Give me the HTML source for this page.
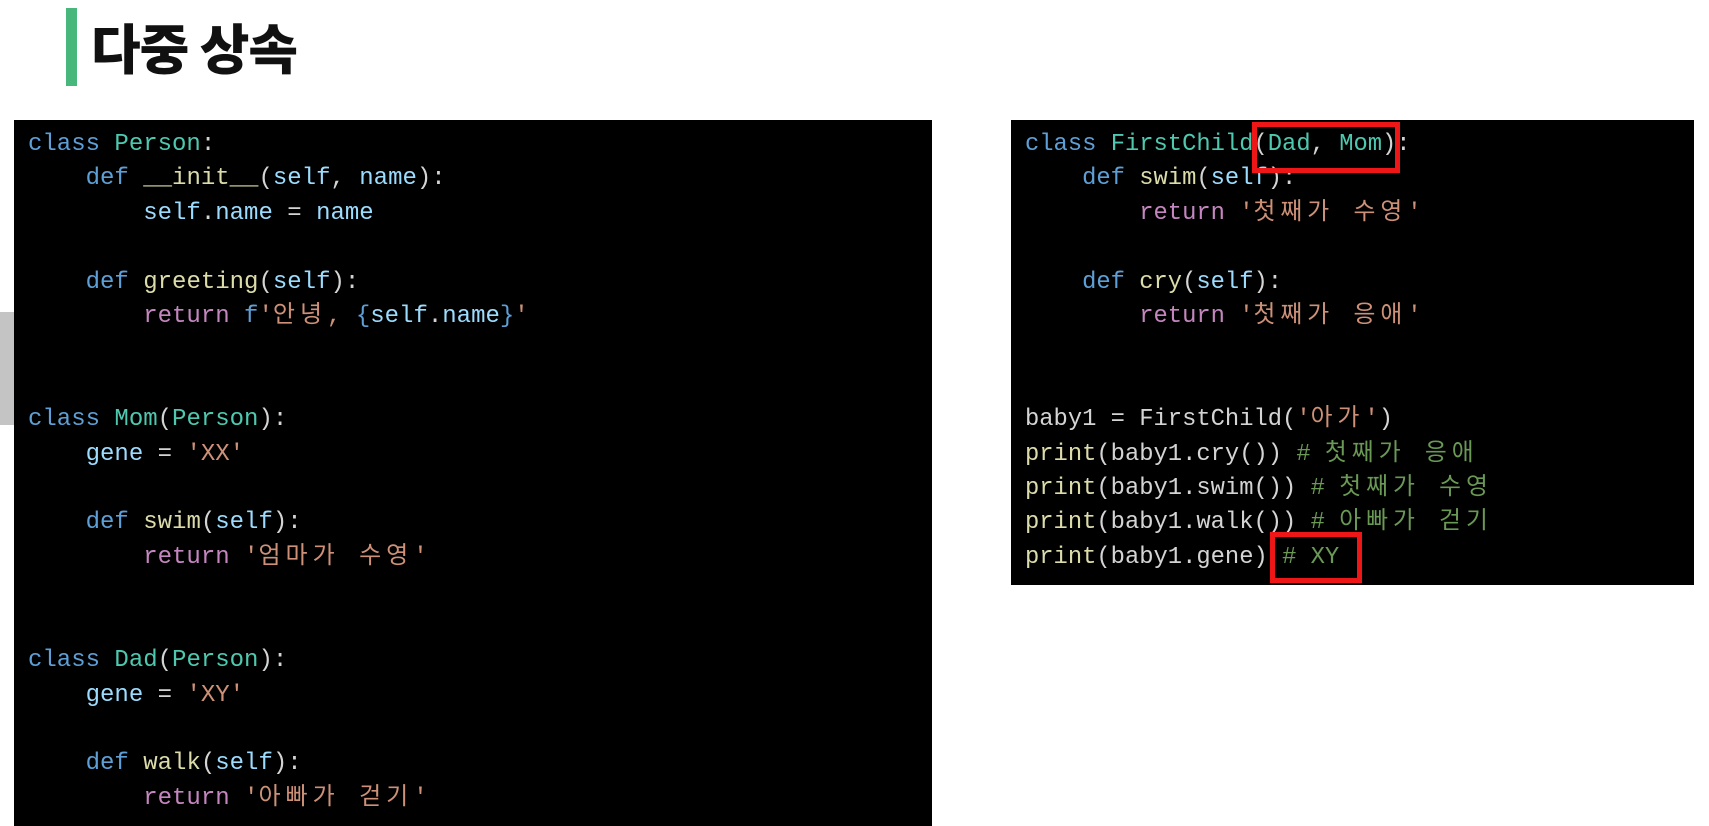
<!DOCTYPE html>
<html><head><meta charset="utf-8"><style>
body{margin:0;width:1709px;height:826px;background:#fff;position:relative;overflow:hidden}
.bar{position:absolute;left:66px;top:8px;width:11px;height:78px;background:#47b77c}
.title{position:absolute;left:91px;top:6px;font:900 54px "Noto Sans CJK KR",sans-serif;color:#111;letter-spacing:-1px;line-height:80px}
.side{position:absolute;left:0;top:312px;width:14px;height:113px;background:#c4c4c4}
.panel{position:absolute;background:#000}
pre{margin:0;font-family:"Liberation Mono","Noto Sans CJK KR",monospace;line-height:34.4px;color:#d4d4d4}
.k{color:#5d9fd6}.c{color:#4ec9b0}.f{color:#dcdcaa}.p{color:#9cdcfe}.r{color:#c586c0}.s{color:#ce9178}.m{color:#6a9955}
.h{letter-spacing:5px}
.box{position:absolute;border:5px solid #ee1616;box-sizing:border-box}
</style></head><body>
<div class="bar"></div><div class="title">다중 상속</div>
<div class="side"></div>
<div class="panel" style="left:14px;top:120px;width:918px;height:706px">
<pre style="position:absolute;left:14px;top:8px;font-size:24px"><span class="k">class</span> <span class="c">Person</span>:
    <span class="k">def</span> <span class="f">__init__</span>(<span class="p">self</span>, <span class="p">name</span>):
        <span class="p">self</span>.<span class="p">name</span> = <span class="p">name</span>

    <span class="k">def</span> <span class="f">greeting</span>(<span class="p">self</span>):
        <span class="r">return</span> <span class="k">f</span><span class="s">'<span class="h">안녕</span>, </span><span class="k">{</span><span class="p">self</span>.<span class="p">name</span><span class="k">}</span><span class="s">'</span>


<span class="k">class</span> <span class="c">Mom</span>(<span class="c">Person</span>):
    <span class="p">gene</span> = <span class="s">'XX'</span>

    <span class="k">def</span> <span class="f">swim</span>(<span class="p">self</span>):
        <span class="r">return</span> <span class="s">'<span class="h">엄마가 수영</span>'</span>


<span class="k">class</span> <span class="c">Dad</span>(<span class="c">Person</span>):
    <span class="p">gene</span> = <span class="s">'XY'</span>

    <span class="k">def</span> <span class="f">walk</span>(<span class="p">self</span>):
        <span class="r">return</span> <span class="s">'<span class="h">아빠가 걷기</span>'</span></pre>
</div>
<div class="panel" style="left:1011px;top:120px;width:683px;height:465px">
<pre style="position:absolute;left:14px;top:8px;font-size:23.8px"><span class="k">class</span> <span class="c">FirstChild</span>(<span class="c">Dad</span>, <span class="c">Mom</span>):
    <span class="k">def</span> <span class="f">swim</span>(<span class="p">self</span>):
        <span class="r">return</span> <span class="s">'<span class="h">첫째가 수영</span>'</span>

    <span class="k">def</span> <span class="f">cry</span>(<span class="p">self</span>):
        <span class="r">return</span> <span class="s">'<span class="h">첫째가 응애</span>'</span>


baby1 = FirstChild(<span class="s">'<span class="h">아가</span>'</span>)
<span class="f">print</span>(baby1.cry()) <span class="m"># <span class="h">첫째가 응애</span></span>
<span class="f">print</span>(baby1.swim()) <span class="m"># <span class="h">첫째가 수영</span></span>
<span class="f">print</span>(baby1.walk()) <span class="m"># <span class="h">아빠가 걷기</span></span>
<span class="f">print</span>(baby1.gene) <span class="m"># XY</span></pre>
</div>
<div class="box" style="left:1252px;top:122px;width:148px;height:51px"></div>
<div class="box" style="left:1270px;top:532px;width:92px;height:51px"></div>
</body></html>
